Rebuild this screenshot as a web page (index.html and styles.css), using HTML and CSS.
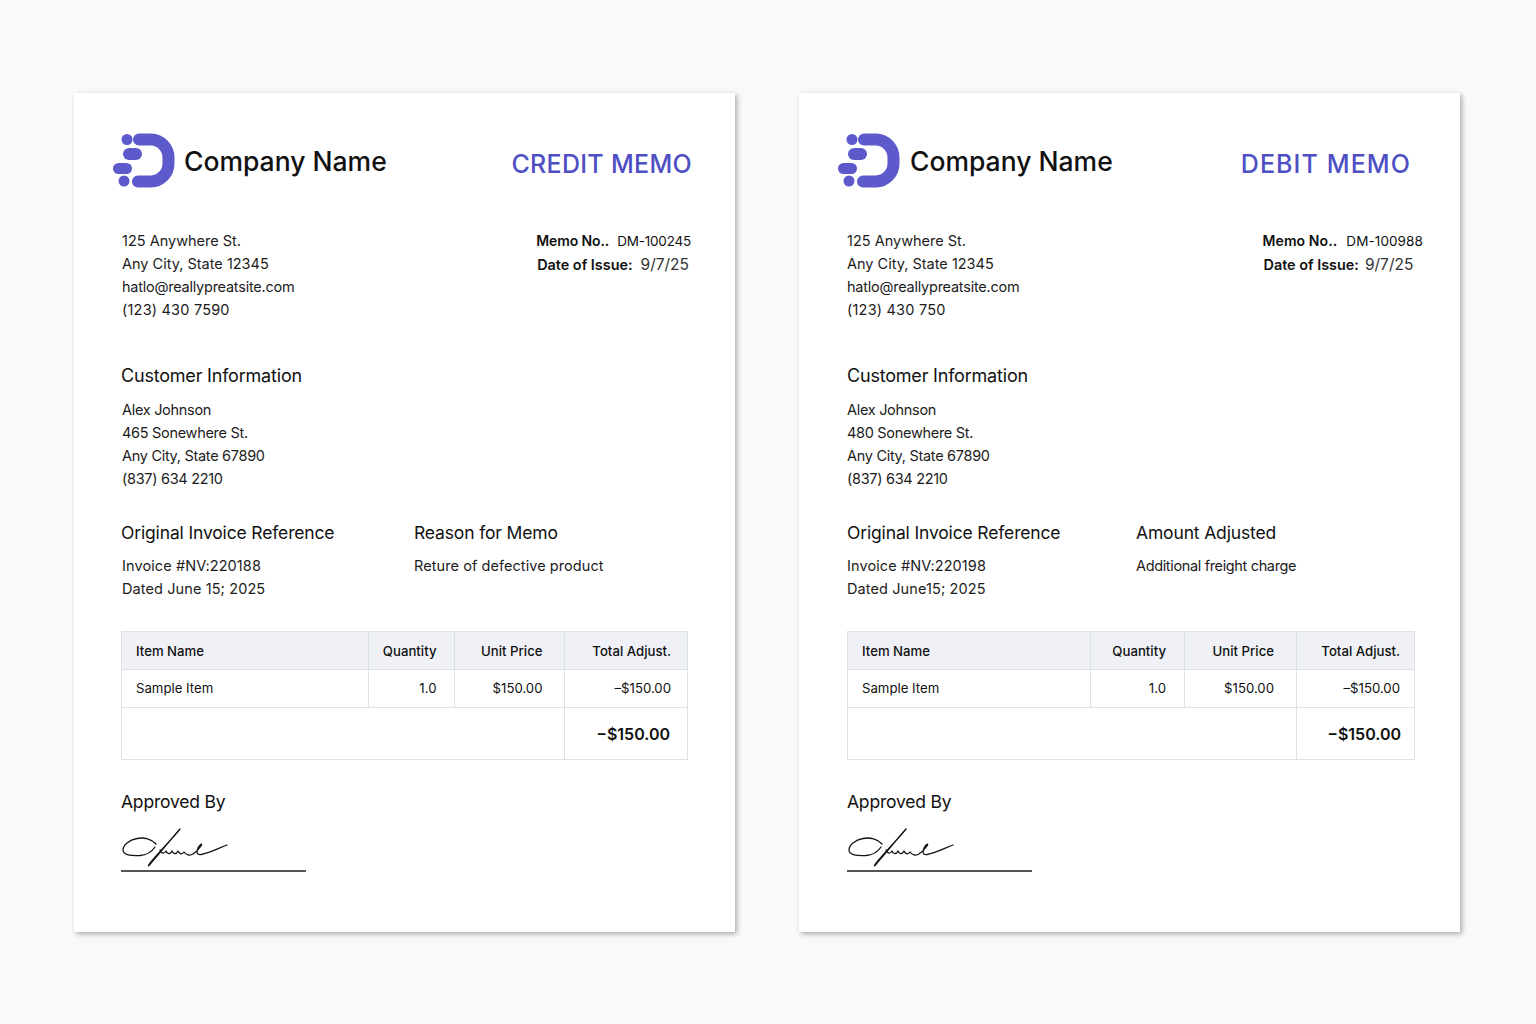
FILE: index.html
```html
<!DOCTYPE html>
<html lang="en">
<head>
<meta charset="utf-8">
<title>Credit and Debit Memo</title>
<link rel="stylesheet" href="styles.css">
</head>
<body>
<svg class="defs" width="0" height="0" aria-hidden="true">
  <symbol id="logo" viewBox="0 0 63 55">
    <path d="M26 6.500H38A18 18 0 0 1 55.500 24.500V30.500A18 18 0 0 1 38 48.500H25" fill="none" stroke="#5d5bcb" stroke-width="12" stroke-linecap="round"/>
    <circle cx="14" cy="6.500" r="5.500" fill="#5d5bcb"/>
    <rect x="10" y="15" width="19" height="12" rx="6" fill="#5d5bcb"/>
    <rect x="0" y="30" width="19" height="11" rx="5.500" fill="#5d5bcb"/>
    <circle cx="11" cy="48" r="5.500" fill="#5d5bcb"/>
  </symbol>
  <symbol id="sign" viewBox="0 0 110 44">
    <path d="M35 18C31 13 23 11 16 12.500C8 14 2 19 2 24C2 29 10 30 19 29.500C25 29 30 27 34 21M59 3C52 12 38 26 30 36C26 41 27 41 30 37C40 26 50 13 59 3ZM39 24C41 28 43 28 45 25C46 28 49 29 51 25C52 28 55 29 57 25C58 28 61 29 63 26C65 29 69 30 72 28C75 26 78 23 80 20C82 17 79 18 77 22C75 27 76 29 80 28.500C89 27 98 22 106 19" fill="none" stroke="#111" stroke-width="1.300" stroke-linecap="round" stroke-linejoin="round"/>
  </symbol>
</svg>
<main class="stage">
  <article class="sheet sheet-credit">
    <header class="top">
      <div class="brand"><svg class="logo"><use href="#logo"/></svg><span class="brand-name">Company Name</span></div>
      <h1 class="doc-title">CREDIT MEMO</h1>
    </header>
    <section class="contact">
      <address class="lines">125 Anywhere St.<br>Any City, State 12345<br><span class="email">hatlo@reallypreatsite.com</span><br><span class="phone">(123) 430 7590</span></address>
      <div class="meta">
        <div class="meta-row meta-no"><b>Memo No..</b><span class="memo-no">DM-100245</span></div>
        <div class="meta-row meta-date"><b>Date of Issue:</b><span class="memo-date">9/7/25</span></div>
      </div>
    </section>
    <section class="customer">
      <h2>Customer Information</h2>
      <address class="lines">Alex Johnson<br>465 Sonewhere St.<br>Any City, State 67890<br>(837) 634 2210</address>
    </section>
    <section class="refs">
      <div class="ref-col">
        <h2>Original Invoice Reference</h2>
        <p class="lines">Invoice #NV:220188<br>Dated June 15; 2025</p>
      </div>
      <div>
        <h2>Reason for Memo</h2>
        <p class="lines note">Reture of defective product</p>
      </div>
    </section>
    <table class="items">
      <colgroup><col class="c1"><col class="c2"><col class="c3"><col class="c4"></colgroup>
      <thead><tr><th class="left">Item Name</th><th>Quantity</th><th>Unit Price</th><th>Total Adjust.</th></tr></thead>
      <tbody>
        <tr><td class="left">Sample Item</td><td>1.0</td><td>$150.00</td><td>–$150.00</td></tr>
        <tr class="sum"><td colspan="3"></td><td>−$150.00</td></tr>
      </tbody>
    </table>
    <section class="approval">
      <h2>Approved By</h2>
      <div class="sign-line"><svg class="sign"><use href="#sign"/></svg></div>
    </section>
  </article>

  <article class="sheet sheet-debit">
    <header class="top">
      <div class="brand"><svg class="logo"><use href="#logo"/></svg><span class="brand-name">Company Name</span></div>
      <h1 class="doc-title">DEBIT MEMO</h1>
    </header>
    <section class="contact">
      <address class="lines">125 Anywhere St.<br>Any City, State 12345<br><span class="email">hatlo@reallypreatsite.com</span><br><span class="phone">(123) 430 750</span></address>
      <div class="meta">
        <div class="meta-row meta-no"><b>Memo No..</b><span class="memo-no">DM-100988</span></div>
        <div class="meta-row meta-date"><b>Date of Issue:</b><span class="memo-date">9/7/25</span></div>
      </div>
    </section>
    <section class="customer">
      <h2>Customer Information</h2>
      <address class="lines">Alex Johnson<br>480 Sonewhere St.<br>Any City, State 67890<br>(837) 634 2210</address>
    </section>
    <section class="refs">
      <div class="ref-col">
        <h2>Original Invoice Reference</h2>
        <p class="lines">Invoice #NV:220198<br>Dated June15; 2025</p>
      </div>
      <div>
        <h2>Amount Adjusted</h2>
        <p class="lines note">Additional freight charge</p>
      </div>
    </section>
    <table class="items">
      <colgroup><col class="c1"><col class="c2"><col class="c3"><col class="c4"></colgroup>
      <thead><tr><th class="left">Item Name</th><th>Quantity</th><th>Unit Price</th><th>Total Adjust.</th></tr></thead>
      <tbody>
        <tr><td class="left">Sample Item</td><td>1.0</td><td>$150.00</td><td>–$150.00</td></tr>
        <tr class="sum"><td colspan="3"></td><td>−$150.00</td></tr>
      </tbody>
    </table>
    <section class="approval">
      <h2>Approved By</h2>
      <div class="sign-line"><svg class="sign"><use href="#sign"/></svg></div>
    </section>
  </article>
</main>
</body>
</html>
```
FILE: styles.css
```css
* { box-sizing: border-box; }
html, body { margin: 0; height: 100%; }
body {
  background: #f9f9f9;
  color: #111;
  font-family: Inter, "Liberation Sans", sans-serif;
  overflow: hidden;
}
.defs { position: absolute; }
.stage {
  display: flex;
  gap: 64px;
  padding: 93px 0 0 74px;
}
.sheet {
  width: 661px;
  height: 839px;
  background: #fff;
  padding: 40px 0 0 47px;
  box-shadow: 2px 2px 5px rgba(0, 0, 0, .32);
}
.sheet-debit { padding-left: 48px; }

.top {
  display: flex;
  justify-content: space-between;
  align-items: flex-start;
  height: 55px;
}
.brand { display: flex; align-items: flex-start; margin-left: -8px; }
.sheet-debit .brand { margin-left: -9px; }
.logo { width: 63px; height: 55px; flex: none; }
.brand-name {
  margin-left: 8px;
  font-size: 26.500px;
  font-weight: 500;
  line-height: 57px;
}
.sheet-debit .brand-name { margin-left: 9px; }
.doc-title {
  margin: 16px 43px 0 0;
  color: #4f4fc4;
  font-size: 25px;
  font-weight: 500;
  line-height: 30px;
  letter-spacing: .3px;
}
.sheet-debit .doc-title { margin-right: 49px; letter-spacing: 1.100px; }

.lines {
  margin: 0;
  font-style: normal;
  font-size: 14.500px;
  line-height: 23px;
  color: #1c1c1c;
}
.sheet-credit address, .sheet-credit .ref-col .lines { margin-left: 1px; }
.email { letter-spacing: -.24px; }
.phone { letter-spacing: .2px; }
.customer .lines { letter-spacing: -.3px; }
.ref-col .lines { letter-spacing: .1px; }
.sheet-credit .note { letter-spacing: .07px; }
.sheet-debit .note { letter-spacing: -.35px; }

h2 {
  margin: 0;
  font-size: 18px;
  font-weight: 400;
  line-height: 24px;
  color: #111;
}

.contact {
  display: flex;
  justify-content: space-between;
  align-items: flex-start;
  margin-top: 41px;
  height: 92px;
  padding-right: 44px;
}
.sheet-debit .contact { padding-right: 37px; }
.meta { font-size: 14px; line-height: 23px; }
.meta-row { display: flex; align-items: baseline; gap: 8px; }
.meta b { font-weight: 600; }
.meta-date { margin-left: 1px; }
.meta-date b { font-size: 14.400px; }
.sheet-debit .meta-date { gap: 6px; }
.memo-no { font-size: 13.500px; }
.sheet-credit .memo-no { letter-spacing: -.2px; }
.sheet-credit .meta-no b { letter-spacing: -.1px; }
.sheet-debit .meta-no { gap: 9px; }
.sheet-debit .meta-no b { letter-spacing: .1px; }
.sheet-debit .memo-no { letter-spacing: .1px; }
.memo-date { font-size: 15.500px; color: #333; }

.customer { margin-top: 43px; }
.customer h2 { margin-bottom: 10px; letter-spacing: -.2px; }

.refs { display: flex; margin-top: 31px; }
.ref-col { width: 293px; }
.sheet-debit .ref-col { width: 289px; }
.refs h2 { margin-bottom: 9px; font-size: 17.500px; letter-spacing: -.15px; }

.items {
  border-collapse: collapse;
  table-layout: fixed;
  width: 566px;
  margin-top: 31px;
  font-size: 13.200px;
}
.sheet-debit .items { width: 567px; }
.items th, .items td {
  border: 1px solid #dde1ea;
  padding: 0 17px 0 14px;
  text-align: right;
}
.items th { height: 38px; background: #eff1f7; font-weight: 500; }
.items td { height: 38px; padding-bottom: 2px; }
.items .left { text-align: left; }
.items tr > :nth-child(3) { padding-right: 21px; }
.items tr > :nth-child(4) { padding-right: 16px; }
.sheet-debit .items tr > :nth-child(2) { padding-right: 18px; }
.sheet-debit .items tr > :nth-child(3) { padding-right: 22px; }
.sheet-debit .items tr > :nth-child(4) { padding-right: 14px; }
.items .sum td { height: 52px; padding-bottom: 0; padding-right: 17px; font-size: 16px; font-weight: 600; }
.sheet-debit .items .sum td { padding-right: 13px; }
.c1 { width: 246.500px; }
.c2 { width: 86px; }
.c3 { width: 110px; }
.c4 { width: 123.500px; }
.sheet-debit .c1 { width: 243px; }
.sheet-debit .c2 { width: 94px; }
.sheet-debit .c3 { width: 112px; }
.sheet-debit .c4 { width: 118px; }

.approval { margin-top: 30px; }
.approval h2 { font-size: 17.500px; letter-spacing: -.2px; }
.sign-line {
  width: 185px;
  height: 46px;
  margin-top: 12px;
  border-bottom: 2px solid #555;
}
.sign { display: block; width: 110px; height: 44px; }
```
